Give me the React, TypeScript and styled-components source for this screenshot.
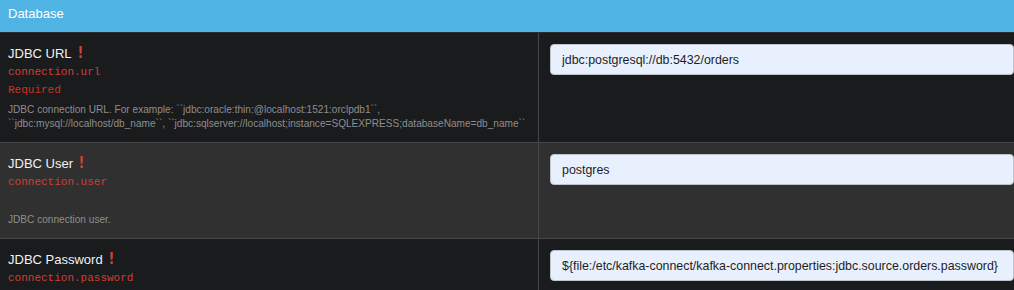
import styled, { createGlobalStyle } from "styled-components";

const GlobalStyle = createGlobalStyle`
  html, body {
    margin: 0;
    padding: 0;
    background: #1a1b1d;
    overflow: hidden;
  }
  body {
    font-family: "Liberation Sans", Arial, sans-serif;
  }
`;

type Field = {
  label: string;
  name: string;
  required: boolean;
  description: string;
  value: string;
};

const fields: Field[] = [
  {
    label: "JDBC URL",
    name: "connection.url",
    required: true,
    description:
      "JDBC connection URL. For example: ``jdbc:oracle:thin:@localhost:1521:orclpdb1``, ``jdbc:mysql://localhost/db_name``, ``jdbc:sqlserver://localhost;instance=SQLEXPRESS;databaseName=db_name``",
    value: "jdbc:postgresql://db:5432/orders",
  },
  {
    label: "JDBC User",
    name: "connection.user",
    required: false,
    description: "JDBC connection user.",
    value: "postgres",
  },
  {
    label: "JDBC Password",
    name: "connection.password",
    required: false,
    description: "JDBC connection password.",
    value: "${file:/etc/kafka-connect/kafka-connect.properties:jdbc.source.orders.password}",
  },
];

const App = () => {
  return (
    <>
      <GlobalStyle />
      <Panel>
        <Header>Database</Header>
        {fields.map((f, i) => (
          <Row key={f.name} $striped={i % 2 === 1}>
            <LabelCell>
              <Title>
                {f.label}
                <Bang>!</Bang>
              </Title>
              <Key>{f.name}</Key>
              <RequiredTag>{f.required ? "Required" : ""}</RequiredTag>
              <Desc>{f.description}</Desc>
            </LabelCell>
            <InputCell>
              <TextInput type="text" defaultValue={f.value} />
            </InputCell>
          </Row>
        ))}
      </Panel>
    </>
  );
};

const Panel = styled.div`
  width: 1014px;
  display: flex;
  flex-direction: column;
`;

const Header = styled.div`
  height: 33px;
  box-sizing: border-box;
  padding: 5px 8px 0;
  background: #4fb3e3;
  border-bottom: 1px solid #2c2d30;
  color: #ffffff;
  font-size: 13px;
  line-height: 18px;
`;

const Row = styled.div<{ $striped: boolean }>`
  display: grid;
  grid-template-columns: 539px 1fr;
  background: ${(p) => (p.$striped ? "#303030" : "#1a1b1d")};
  border-bottom: 1px solid #464646;
`;

const LabelCell = styled.div`
  padding: 11px 8px 11px;
  border-right: 1px solid #464646;
  display: flex;
  flex-direction: column;
`;

const Title = styled.div`
  height: 19px;
  color: #f2f2f2;
  font-size: 13px;
  line-height: 19px;
`;

const Bang = styled.span`
  display: inline-block;
  margin-left: 5px;
  color: #d3432f;
  font-family: "DejaVu Sans", sans-serif;
  font-weight: 900;
  font-size: 15px;
  line-height: 14px;
  transform: scaleX(0.85);
`;

const Key = styled.div`
  color: #cd3f37;
  font-family: "Liberation Mono", "Courier New", monospace;
  font-size: 11px;
  line-height: 18px;
`;

const RequiredTag = styled.div`
  color: #d3301f;
  font-family: "Liberation Mono", "Courier New", monospace;
  font-size: 11px;
  line-height: 18px;
  min-height: 18px;
`;

const Desc = styled.div`
  margin-top: 4px;
  color: #8e8e8e;
  font-size: 10.1px;
  line-height: 14px;
`;

const InputCell = styled.div`
  padding: 11px 0 0 11px;
`;

const TextInput = styled.input`
  width: 100%;
  height: 31px;
  box-sizing: border-box;
  padding: 0 11px;
  border: 1px solid #bcc4cd;
  border-radius: 4px;
  background: #e8f0fe;
  color: #1e1e1e;
  font-family: "Liberation Sans", Arial, sans-serif;
  font-size: 12.4px;
  outline: none;
`;

export default App;
